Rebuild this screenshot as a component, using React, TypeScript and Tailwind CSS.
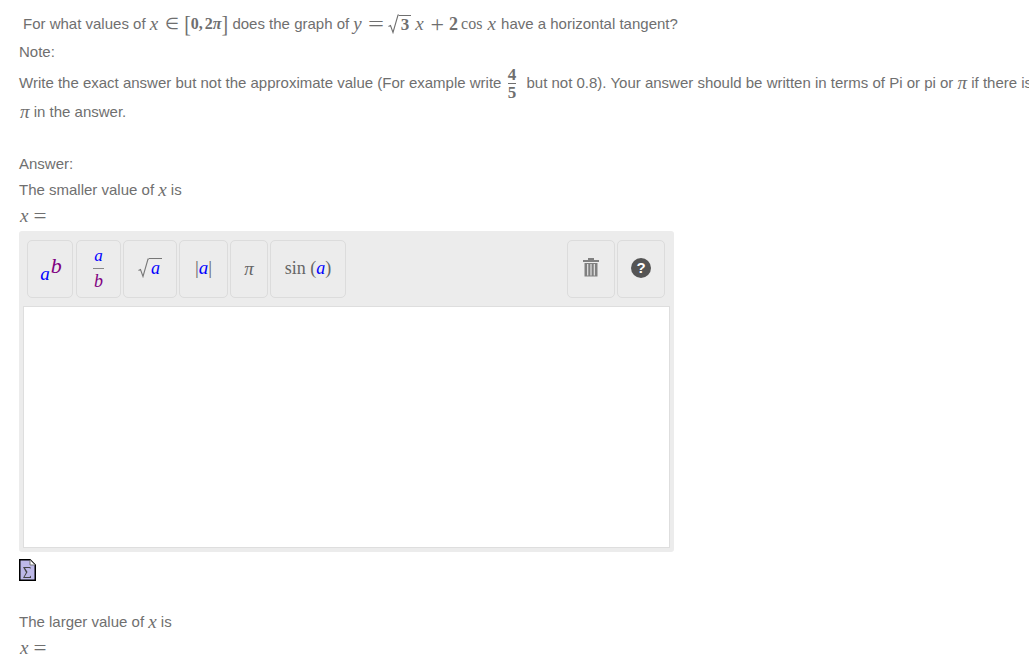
import React from "react";

const M = ({ children, className = "" }: { children: React.ReactNode; className?: string }) => (
  <span className={`font-['Liberation_Serif'] italic text-[19px] ${className}`}>{children}</span>
);
const R = ({ children, className = "" }: { children: React.ReactNode; className?: string }) => (
  <span className={`font-['Liberation_Serif'] ${className}`}>{children}</span>
);

const Sqrt = ({ children, className = "", h = 20 }: { children: React.ReactNode; className?: string; h?: number }) => (
  <span className={`inline-flex items-end ${className}`}>
    <svg width="11" height={h} viewBox="0 0 11 20" preserveAspectRatio="none" className="shrink-0">
      <path d="M0.5 12.5 L2.5 11.5 L5 18.5 L10 1 L11 1" fill="none" stroke="currentColor" strokeWidth="1.1" />
    </svg>
    <span className="border-t border-current leading-[18px]">{children}</span>
  </span>
);

const Btn = ({ w, children }: { w: string; children: React.ReactNode }) => (
  <div className={`${w} h-[58px] shrink-0 rounded-[5px] border border-[#dcdcdc] bg-[#ececec] flex items-center justify-center`}>
    {children}
  </div>
);

const XEq = () => (
  <div className="mt-[8px] h-[18px] leading-[18px] flex items-center">
    <M className="ml-[1px]">x</M>
    <R className="text-[21px] ml-[6px] inline-block scale-x-[1.1]">=</R>
  </div>
);

export default function App() {
  return (
    <div className="w-[1029px] h-[663px] overflow-hidden bg-white pl-[19px] font-['Liberation_Sans',Arial,sans-serif] text-[15px] text-[#6f6f6f]">
      <div className="h-[15px]" />
      <div className="h-[18px] leading-[18px] pl-[4px] whitespace-nowrap flex items-center">
        <span>For what values of&nbsp;</span>
        <M>x</M>
        <R className="text-[16px] ml-[7px] mr-[5px]">∈</R>
        <R className="text-[20px] inline-block scale-y-[1.2]">[</R>
        <R className="text-[16px] font-bold">0,<span className="ml-[2px]">2</span><i>π</i></R>
        <R className="text-[20px] inline-block scale-y-[1.2]">]</R>
        <span>&nbsp;does the graph of&nbsp;</span>
        <M>y</M>
        <R className="text-[21px] ml-[8px] mr-[6px] inline-block scale-x-[1.35]">=</R>
        <Sqrt className="text-[17px] font-bold font-['Liberation_Serif']"><span className="px-[2px]">3</span></Sqrt>
        <M className="ml-[4px]">x</M>
        <R className="text-[24px] ml-[7px]">+</R>
        <R className="text-[18px] font-bold ml-[5px]">2</R>
        <R className="text-[16px] ml-[3px]">cos</R>
        <M className="ml-[5px]">x</M>
        <span className="ml-[1px]">&nbsp;have a horizontal tangent?</span>
      </div>
      <div className="mt-[10px] h-[18px] leading-[18px]">Note:</div>
      <div className="mt-[4px] h-[36px] flex items-center whitespace-nowrap">
        <span>Write the exact answer but not the approximate value (For example write&nbsp;</span>
        <span className="inline-flex flex-col items-center ml-[2px] w-[12px] font-['Liberation_Serif'] text-[17px] font-bold">
          <span className="border-b border-[#6f6f6f] w-full text-center leading-[17px]">4</span>
          <span className="leading-[17px]">5</span>
        </span>
        <span className="ml-[2px]">&nbsp;&nbsp;but not 0.8). Your answer should be written in terms of Pi or pi or&nbsp;</span>
        <M>π</M>
        <span>&nbsp;if there is</span>
      </div>
      <div className="mt-[2px] h-[18px] leading-[18px] flex items-center">
        <M className="ml-[1px]">π</M>
        <span>&nbsp;in the answer.</span>
      </div>
      <div className="mt-[34px] h-[18px] leading-[18px]">Answer:</div>
      <div className="mt-[8px] h-[18px] leading-[18px] flex items-center">
        <span>The smaller value of&nbsp;</span>
        <M>x</M>
        <span>&nbsp;is</span>
      </div>
      <XEq />
      <div className="mt-[6px] w-[655px] h-[321px] rounded-[3px] bg-[#ececec] px-[4px] pt-[9px] pb-[4px] flex flex-col">
        <div className="flex h-[58px] pl-[4px] pr-[5px] gap-[2px]">
          <div className="mr-[1px]">
            <Btn w="w-[46px]">
              <span className="font-['Liberation_Serif'] italic flex items-end leading-none translate-x-[1px]">
                <span className="text-[#0000ff] text-[19px] translate-y-[3px]">a</span>
                <span className="text-[#800080] text-[22px] ml-[1px] -translate-y-[3px]">b</span>
              </span>
            </Btn>
          </div>
          <Btn w="w-[45px]">
            <span className="font-['Liberation_Serif'] italic text-[17px] flex flex-col items-center leading-none -translate-y-[1px]">
              <span className="text-[#0000ff] pb-[4px]">a</span>
              <span className="w-[11px] border-t border-[#888]" />
              <span className="text-[#800080] pt-[3px] text-[18px]">b</span>
            </span>
          </Btn>
          <Btn w="w-[54px]">
            <Sqrt className="text-[#777] -translate-y-[1px]"><span className="font-['Liberation_Serif'] italic text-[18px] text-[#0000ff] px-[2px]">a</span></Sqrt>
          </Btn>
          <Btn w="w-[49px]">
            <span className="font-['Liberation_Serif'] text-[19px] text-[#666] -translate-y-[1px]">|<i className="text-[#0000ff]">a</i>|</span>
          </Btn>
          <Btn w="w-[38px]">
            <M className="text-[#666] text-[18px]">π</M>
          </Btn>
          <Btn w="w-[76px]">
            <span className="font-['Liberation_Serif'] text-[18px] text-[#666] whitespace-nowrap -translate-y-[1px]">sin (<i className="text-[#0000ff]">a</i>)</span>
          </Btn>
          <div className="flex-1" />
          <Btn w="w-[48px]">
            <svg width="18" height="20" viewBox="0 0 18 20" className="-translate-y-[2px]">
              <path d="M1 3h16v2H1z M6 1h6v2H6z" fill="#808080" />
              <path d="M2.5 6h13v13.5h-13z" fill="#808080" />
              <path d="M5.7 7v11.5M9 7v11.5M12.3 7v11.5" stroke="#ececec" strokeWidth="1.1" />
            </svg>
          </Btn>
          <Btn w="w-[48px]">
            <span className="w-[20px] h-[20px] rounded-full bg-[#555] text-white font-bold text-[15px] leading-[20px] text-center -translate-y-[1px]">?</span>
          </Btn>
        </div>
        <div className="mt-[8px] flex-1 bg-white border border-[#dedede]" />
      </div>
      <svg width="17" height="22" viewBox="0 0 17 22" className="mt-[7px] block">
        <path d="M0.75 0.75H11L16.25 6V21.25H0.75Z" fill="#bdb8e8" stroke="#000" strokeWidth="1.5" />
        <path d="M11 1V6H16" fill="#fff" stroke="#777" strokeWidth="1" />
        <path d="M4 8H11.5V10L10.5 9H6L8.5 13L5.5 18H10.5L12 16.5V19H4L7 13.5Z" fill="#444" />
      </svg>
      <div className="mt-[32px] h-[18px] leading-[18px] flex items-center">
        <span>The larger value of&nbsp;</span>
        <M>x</M>
        <span>&nbsp;is</span>
      </div>
      <XEq />
    </div>
  );
}
